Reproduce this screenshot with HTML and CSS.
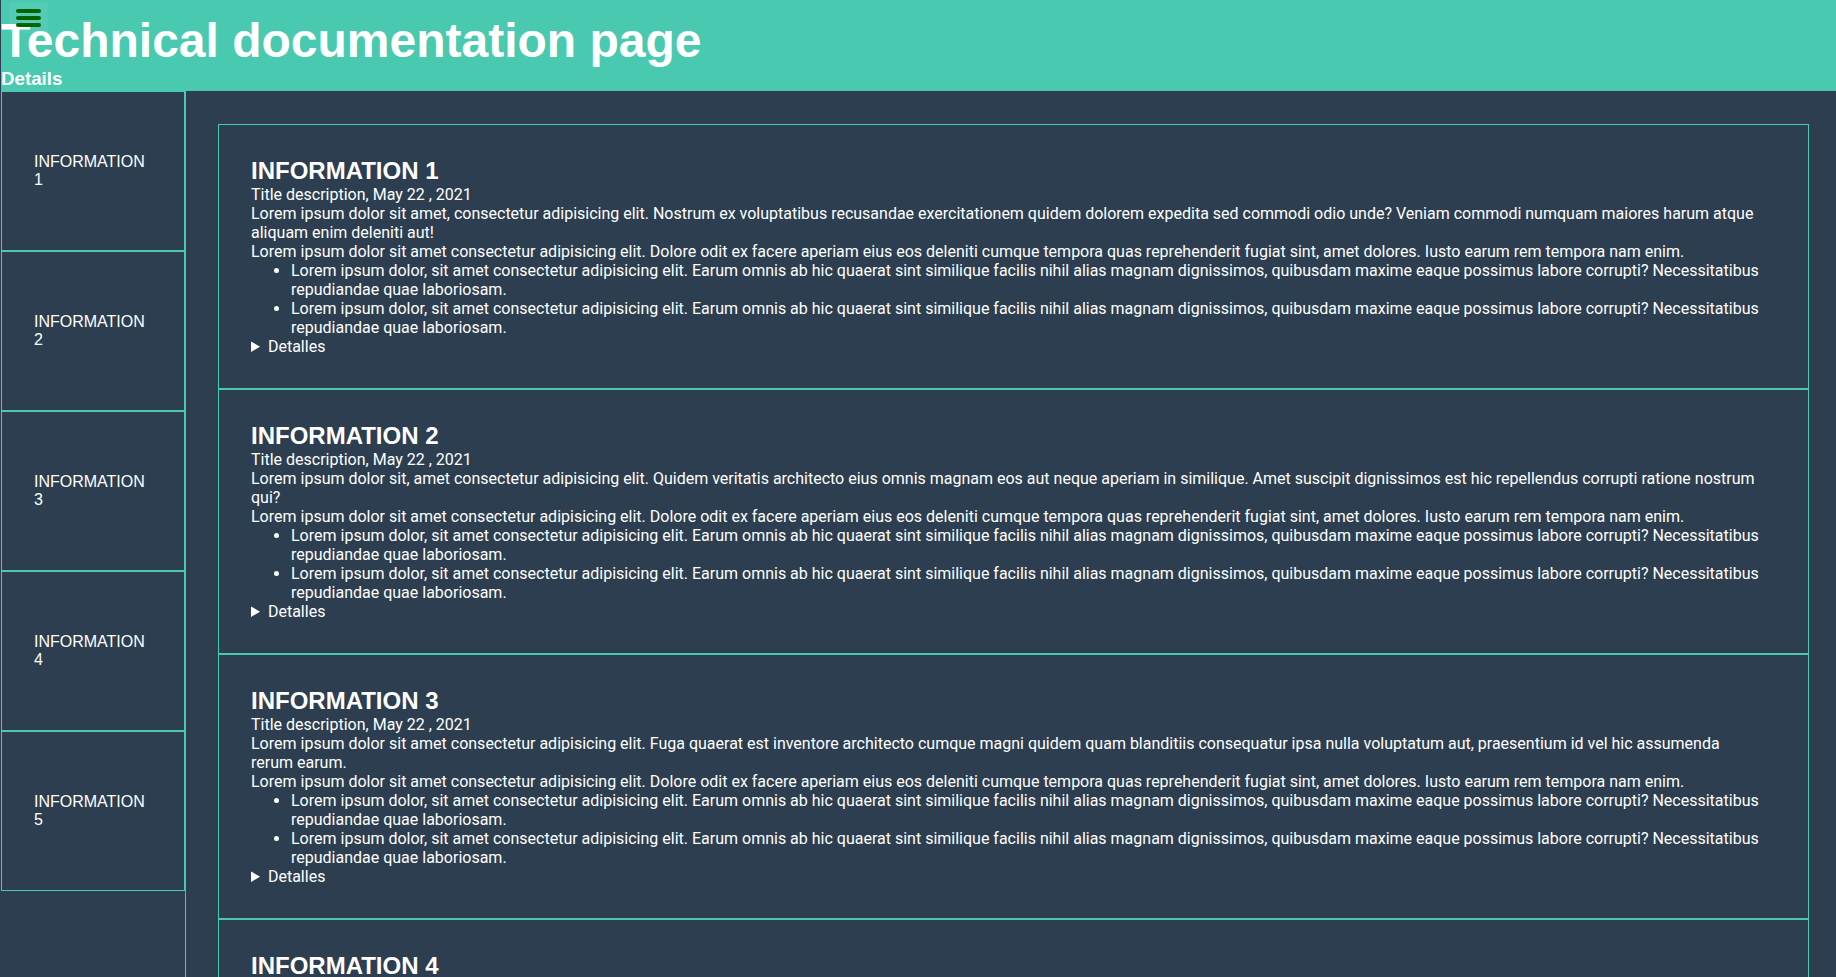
FILE: index.html
```html
<!DOCTYPE html>
<html lang="en">
<head>
<meta charset="utf-8">
<title>Technical documentation page</title>
<link rel="stylesheet" href="styles.css">
</head>
<body>
<header class="top">
  <button class="burger" type="button" aria-label="Menu">
    <span class="bar"></span><span class="bar"></span><span class="bar"></span>
  </button>
  <h1 class="top-title">Technical documentation page</h1>
  <div class="top-sub">Details</div>
</header>
<div class="layout">
  <nav class="side">
    <a class="side-link" href="#info1">INFORMATION 1</a>
    <a class="side-link" href="#info2">INFORMATION 2</a>
    <a class="side-link" href="#info3">INFORMATION 3</a>
    <a class="side-link" href="#info4">INFORMATION 4</a>
    <a class="side-link" href="#info5">INFORMATION 5</a>
  </nav>
  <main class="main">
    <section class="card" id="info1">
      <h2 class="card-title">INFORMATION 1</h2>
      <p class="card-meta">Title description, May 22 , 2021</p>
      <p class="card-text">Lorem ipsum dolor sit amet, consectetur adipisicing elit. Nostrum ex voluptatibus recusandae exercitationem quidem dolorem expedita sed commodi odio unde? Veniam commodi numquam maiores harum atque aliquam enim deleniti aut!</p>
      <p class="card-text">Lorem ipsum dolor sit amet consectetur adipisicing elit. Dolore odit ex facere aperiam eius eos deleniti cumque tempora quas reprehenderit fugiat sint, amet dolores. Iusto earum rem tempora nam enim.</p>
      <ul class="card-list">
        <li>Lorem ipsum dolor, sit amet consectetur adipisicing elit. Earum omnis ab hic quaerat sint similique facilis nihil alias magnam dignissimos, quibusdam maxime eaque possimus labore corrupti? Necessitatibus repudiandae quae laboriosam.</li>
        <li>Lorem ipsum dolor, sit amet consectetur adipisicing elit. Earum omnis ab hic quaerat sint similique facilis nihil alias magnam dignissimos, quibusdam maxime eaque possimus labore corrupti? Necessitatibus repudiandae quae laboriosam.</li>
      </ul>
      <details class="card-details"><summary>Detalles</summary><p class="card-text">Lorem ipsum dolor sit amet consectetur adipisicing elit.</p></details>
    </section>
    <section class="card" id="info2">
      <h2 class="card-title">INFORMATION 2</h2>
      <p class="card-meta">Title description, May 22 , 2021</p>
      <p class="card-text">Lorem ipsum dolor sit, amet consectetur adipisicing elit. Quidem veritatis architecto eius omnis magnam eos aut neque aperiam in similique. Amet suscipit dignissimos est hic repellendus corrupti ratione nostrum qui?</p>
      <p class="card-text">Lorem ipsum dolor sit amet consectetur adipisicing elit. Dolore odit ex facere aperiam eius eos deleniti cumque tempora quas reprehenderit fugiat sint, amet dolores. Iusto earum rem tempora nam enim.</p>
      <ul class="card-list">
        <li>Lorem ipsum dolor, sit amet consectetur adipisicing elit. Earum omnis ab hic quaerat sint similique facilis nihil alias magnam dignissimos, quibusdam maxime eaque possimus labore corrupti? Necessitatibus repudiandae quae laboriosam.</li>
        <li>Lorem ipsum dolor, sit amet consectetur adipisicing elit. Earum omnis ab hic quaerat sint similique facilis nihil alias magnam dignissimos, quibusdam maxime eaque possimus labore corrupti? Necessitatibus repudiandae quae laboriosam.</li>
      </ul>
      <details class="card-details"><summary>Detalles</summary><p class="card-text">Lorem ipsum dolor sit amet consectetur adipisicing elit.</p></details>
    </section>
    <section class="card" id="info3">
      <h2 class="card-title">INFORMATION 3</h2>
      <p class="card-meta">Title description, May 22 , 2021</p>
      <p class="card-text">Lorem ipsum dolor sit amet consectetur adipisicing elit. Fuga quaerat est inventore architecto cumque magni quidem quam blanditiis consequatur ipsa nulla voluptatum aut, praesentium id vel hic assumenda rerum earum.</p>
      <p class="card-text">Lorem ipsum dolor sit amet consectetur adipisicing elit. Dolore odit ex facere aperiam eius eos deleniti cumque tempora quas reprehenderit fugiat sint, amet dolores. Iusto earum rem tempora nam enim.</p>
      <ul class="card-list">
        <li>Lorem ipsum dolor, sit amet consectetur adipisicing elit. Earum omnis ab hic quaerat sint similique facilis nihil alias magnam dignissimos, quibusdam maxime eaque possimus labore corrupti? Necessitatibus repudiandae quae laboriosam.</li>
        <li>Lorem ipsum dolor, sit amet consectetur adipisicing elit. Earum omnis ab hic quaerat sint similique facilis nihil alias magnam dignissimos, quibusdam maxime eaque possimus labore corrupti? Necessitatibus repudiandae quae laboriosam.</li>
      </ul>
      <details class="card-details"><summary>Detalles</summary><p class="card-text">Lorem ipsum dolor sit amet consectetur adipisicing elit.</p></details>
    </section>
    <section class="card" id="info4">
      <h2 class="card-title">INFORMATION 4</h2>
      <p class="card-meta">Title description, May 22 , 2021</p>
      <p class="card-text">Lorem ipsum dolor sit amet consectetur adipisicing elit. Quibusdam, voluptates. Quasi, ipsum incidunt. Porro dolorem aspernatur voluptatum quae, odio cumque nisi eius.</p>
      <p class="card-text">Lorem ipsum dolor sit amet consectetur adipisicing elit. Dolore odit ex facere aperiam eius eos deleniti cumque tempora quas reprehenderit fugiat sint, amet dolores. Iusto earum rem tempora nam enim.</p>
      <ul class="card-list">
        <li>Lorem ipsum dolor, sit amet consectetur adipisicing elit. Earum omnis ab hic quaerat sint similique facilis nihil alias magnam dignissimos, quibusdam maxime eaque possimus labore corrupti? Necessitatibus repudiandae quae laboriosam.</li>
      </ul>
      <details class="card-details"><summary>Detalles</summary><p class="card-text">Lorem ipsum dolor sit amet consectetur adipisicing elit.</p></details>
    </section>
    <section class="card" id="info5">
      <h2 class="card-title">INFORMATION 5</h2>
      <p class="card-meta">Title description, May 22 , 2021</p>
      <p class="card-text">Lorem ipsum dolor sit amet consectetur adipisicing elit. Dolore odit ex facere aperiam eius eos deleniti cumque tempora quas reprehenderit fugiat sint, amet dolores. Iusto earum rem tempora nam enim.</p>
      <details class="card-details"><summary>Detalles</summary><p class="card-text">Lorem ipsum dolor sit amet consectetur adipisicing elit.</p></details>
    </section>
  </main>
</div>
</body>
</html>
```
FILE: styles.css
```css
html {
  background: #2c3e50;
}
body {
  margin: 0;
  padding-left: 1px;
  background: #2c3e50;
  color: #ffffff;
  font-family: "Liberation Sans", Arial, sans-serif;
  font-size: 16px;
}
.top {
  position: relative;
  height: 91px;
  box-sizing: border-box;
  padding-top: 13px;
  background: #48c9b0;
  color: #ffffff;
}
.burger {
  position: absolute;
  left: 8px;
  top: 3px;
  width: 39px;
  height: 30px;
  padding: 6px 7px;
  margin: 0;
  border: 0;
  box-sizing: border-box;
  background: rgba(255, 255, 255, 0.07);
  display: flex;
  flex-direction: column;
  justify-content: space-between;
  align-items: flex-start;
}
.bar {
  display: block;
  width: 25px;
  height: 4px;
  border-radius: 2px;
  background: #006400;
}
.top-title {
  margin: 0;
  font-family: "Liberation Sans", Arial, sans-serif;
  font-size: 48px;
  font-weight: bold;
  line-height: normal;
}
.top-sub {
  font-family: "Liberation Sans", Arial, sans-serif;
  font-size: 18.72px;
  font-weight: bold;
  line-height: normal;
}
.layout {
  display: flex;
  align-items: stretch;
}
.side {
  flex: 0 0 184px;
  display: flex;
  flex-direction: column;
  border-right: 1px solid #48c9b0;
  min-height: 900px;
}
.side-link {
  display: flex;
  align-items: center;
  height: 160px;
  box-sizing: border-box;
  padding: 0 32px;
  border: 1px solid #48c9b0;
  color: #ffffff;
  text-decoration: none;
  font-family: "Liberation Sans", Arial, sans-serif;
  font-size: 16px;
  line-height: normal;
}
.main {
  flex: 1 1 auto;
  padding: 33px 27px 32px 32px;
  min-width: 0;
}
.card {
  border: 1px solid #48c9b0;
  padding: 32px 48px 32px 32px;
  font-family: Roboto, "Liberation Sans", Arial, sans-serif;
  font-size: 16px;
  line-height: 19px;
}
.card-title {
  margin: 0;
  font-family: "Liberation Sans", Arial, sans-serif;
  font-size: 24px;
  font-weight: bold;
  line-height: normal;
}
.card-meta,
.card-text {
  margin: 0;
}
.card-list {
  margin: 0;
  padding-left: 40px;
}
.card-details summary {
  cursor: pointer;
}
```
